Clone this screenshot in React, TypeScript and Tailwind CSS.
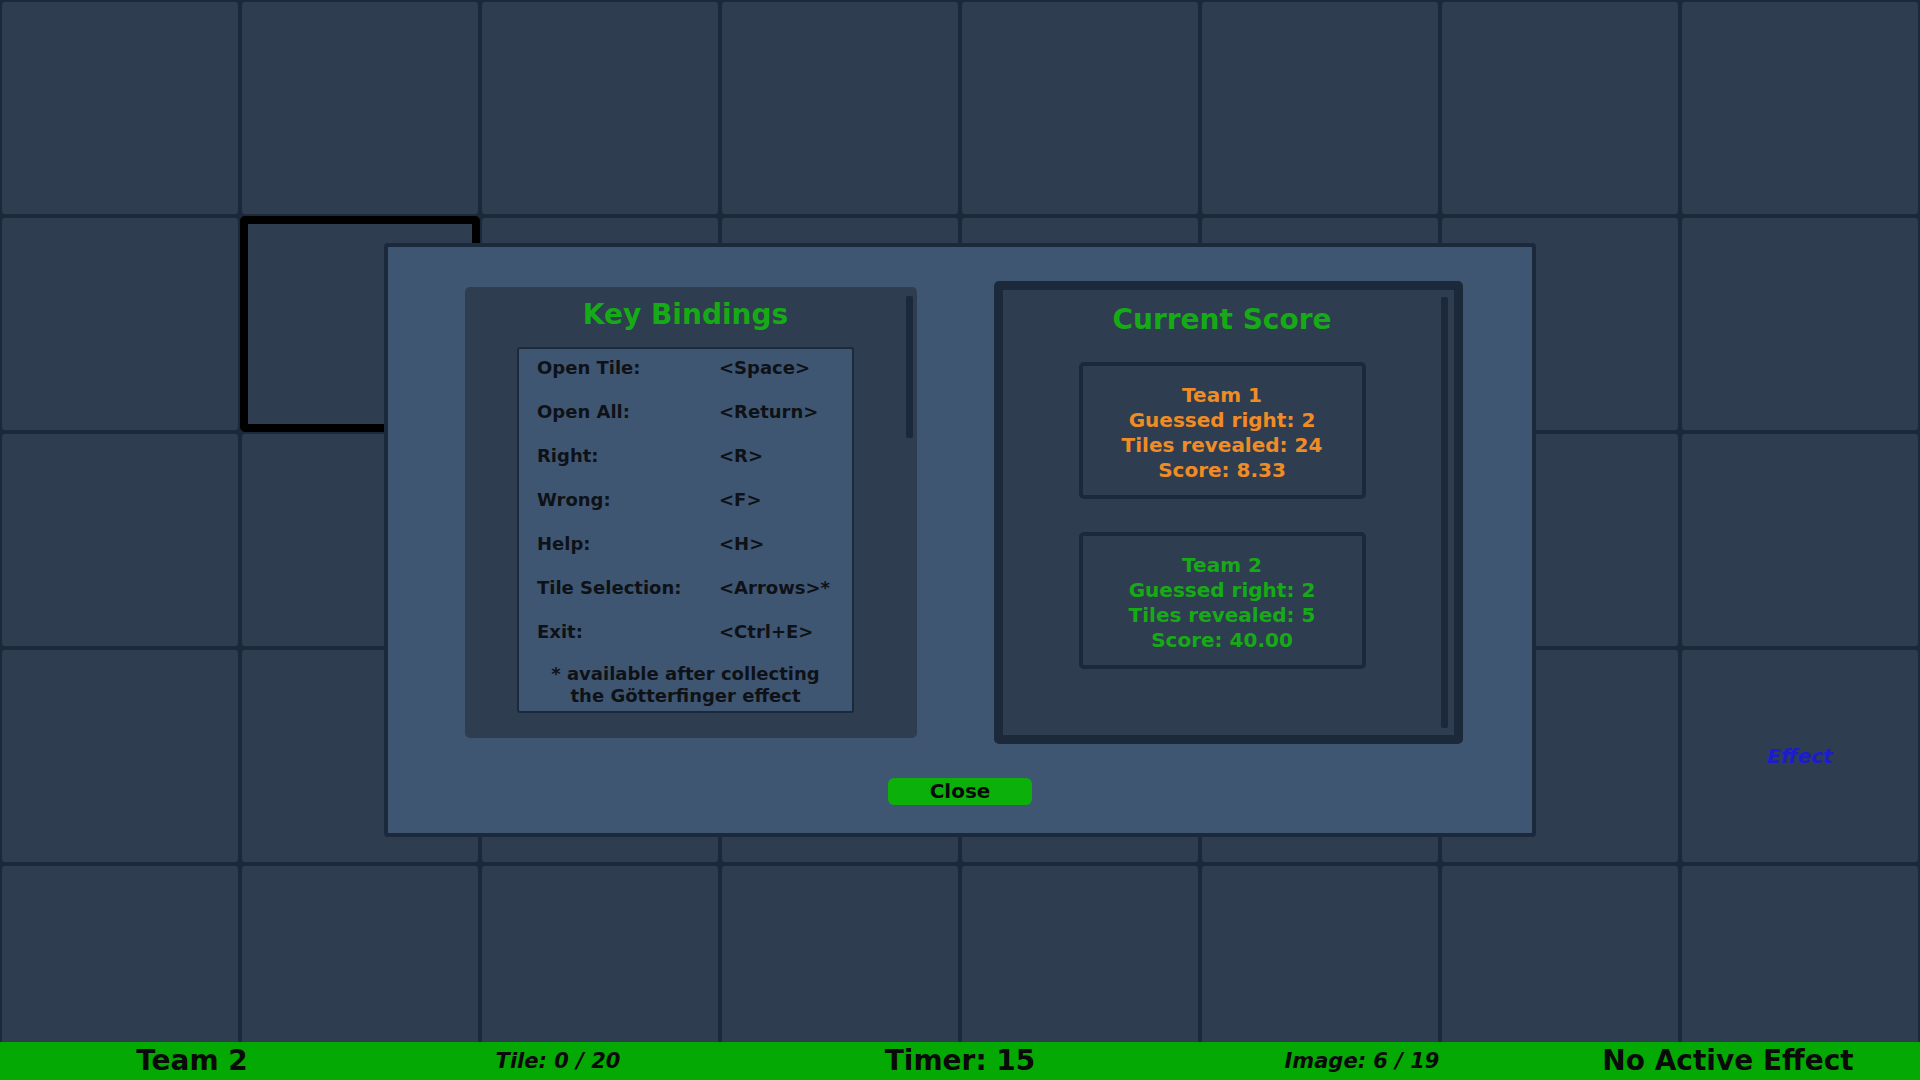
import React from "react";

const FONT = { fontFamily: '"DejaVu Sans", Verdana, sans-serif' };

function Tile({ index }: { index: number }) {
  const row = Math.floor(index / 8);
  const col = index % 8;
  const selected = row === 1 && col === 1;
  const effect = row === 3 && col === 7;
  return (
    <div
      className={
        selected
          ? "flex items-center justify-center rounded-[5px] border-[8px] border-black bg-[#2e3d4f]"
          : "flex items-center justify-center rounded-[5px] border-[2px] border-[#1b293b] bg-[#2e3d4f]"
      }
    >
      {effect && (
        <span className="text-[20px] font-bold italic text-[#1b1bd0]">Effect</span>
      )}
    </div>
  );
}

const bindings: [string, string][] = [
  ["Open Tile:", "<Space>"],
  ["Open All:", "<Return>"],
  ["Right:", "<R>"],
  ["Wrong:", "<F>"],
  ["Help:", "<H>"],
  ["Tile Selection:", "<Arrows>*"],
  ["Exit:", "<Ctrl+E>"],
];

function TeamBox({
  name,
  right,
  tiles,
  score,
  color,
}: {
  name: string;
  right: number;
  tiles: number;
  score: string;
  color: string;
}) {
  return (
    <div
      className={`flex h-[137px] w-[287px] flex-col items-center rounded-[5px] border-[4px] border-[#1b293b] bg-[#2e3d4f] pt-[17px] text-[20px] font-bold leading-[25px] ${color}`}
    >
      <div>{name}</div>
      <div>Guessed right: {right}</div>
      <div>Tiles revealed: {tiles}</div>
      <div>Score: {score}</div>
    </div>
  );
}

export default function App() {
  const tiles = Array.from({ length: 40 }, (_, i) => i);
  return (
    <div
      className="relative flex h-[1080px] w-[1920px] flex-col overflow-hidden bg-[#1b293b]"
      style={FONT}
    >
      <div className="grid h-[1042px] grid-cols-8 grid-rows-[repeat(5,216px)] overflow-hidden">
        {tiles.map((i) => (
          <Tile key={i} index={i} />
        ))}
      </div>

      <div className="grid h-[38px] grid-cols-[384px_348px_456px_348px_384px] items-center bg-[#04a904] text-[#0a0a0a]">
        <div className="text-center text-[28px] font-bold leading-[38px]">Team 2</div>
        <div className="text-center text-[21px] font-bold italic leading-[38px]">Tile: 0 / 20</div>
        <div className="text-center text-[28px] font-bold leading-[38px]">Timer: 15</div>
        <div className="text-center text-[21px] font-bold italic leading-[38px]">Image: 6 / 19</div>
        <div className="text-center text-[28px] font-bold leading-[38px]">No Active Effect</div>
      </div>

      {/* Modal overlay */}
      <div className="absolute left-[384px] top-[243px] flex h-[594px] w-[1152px] flex-col rounded-[4px] border-[4px] border-[#1b293b] bg-[#3f5673]">
        <div className="mt-[34px] flex h-[463px] items-center gap-[77px] pl-[77px]">
          {/* Key bindings panel */}
          <div className="flex h-[451px] w-[452px] rounded-[5px] bg-[#2e3d4f]">
            <div className="flex flex-1 flex-col items-center pt-[11px]">
              <div className="text-[28px] font-bold leading-[34px] text-[#17aa17]">Key Bindings</div>
              <div className="mt-[15px] flex h-[366px] w-[337px] flex-col rounded-[3px] border-[2px] border-[#1b293b] bg-[#3f5673] pt-[8px] text-[18px] font-bold leading-[22px] text-[#0e1216]">
                <div className="flex flex-col gap-[22px] pl-[18px]">
                  {bindings.map(([k, v]) => (
                    <div key={k} className="grid grid-cols-[182px_1fr]">
                      <span>{k}</span>
                      <span>{v}</span>
                    </div>
                  ))}
                </div>
                <div className="mt-[20px] text-center">
                  <div>* available after collecting</div>
                  <div>the Götterfinger effect</div>
                </div>
              </div>
            </div>
            <div className="w-[11px] pr-[4px] pt-[9px]">
              <div className="h-[142px] w-[7px] rounded-[2px] bg-[#1b293b]" />
            </div>
          </div>

          {/* Current score panel */}
          <div className="flex h-[463px] w-[469px] rounded-[5px] border-[9px] border-[#1b293b] bg-[#2e3d4f]">
            <div className="flex flex-1 flex-col items-center pt-[13px]">
              <div className="text-[28px] font-bold leading-[34px] text-[#17aa17]">Current Score</div>
              <div className="mt-[25px]">
                <TeamBox name="Team 1" right={2} tiles={24} score="8.33" color="text-[#f08c26]" />
              </div>
              <div className="mt-[33px]">
                <TeamBox name="Team 2" right={2} tiles={5} score="40.00" color="text-[#17aa17]" />
              </div>
            </div>
            <div className="w-[13px] pb-[7px] pr-[6px] pt-[7px]">
              <div className="h-full w-[7px] rounded-[2px] bg-[#1b293b]" />
            </div>
          </div>
        </div>

        <div className="mt-[34px] flex justify-center">
          <div className="flex h-[27px] w-[144px] items-center justify-center rounded-[6px] bg-[#0bb00b] text-[20px] font-bold leading-[27px] text-[#0a0a0a]">
            Close
          </div>
        </div>
      </div>
    </div>
  );
}
